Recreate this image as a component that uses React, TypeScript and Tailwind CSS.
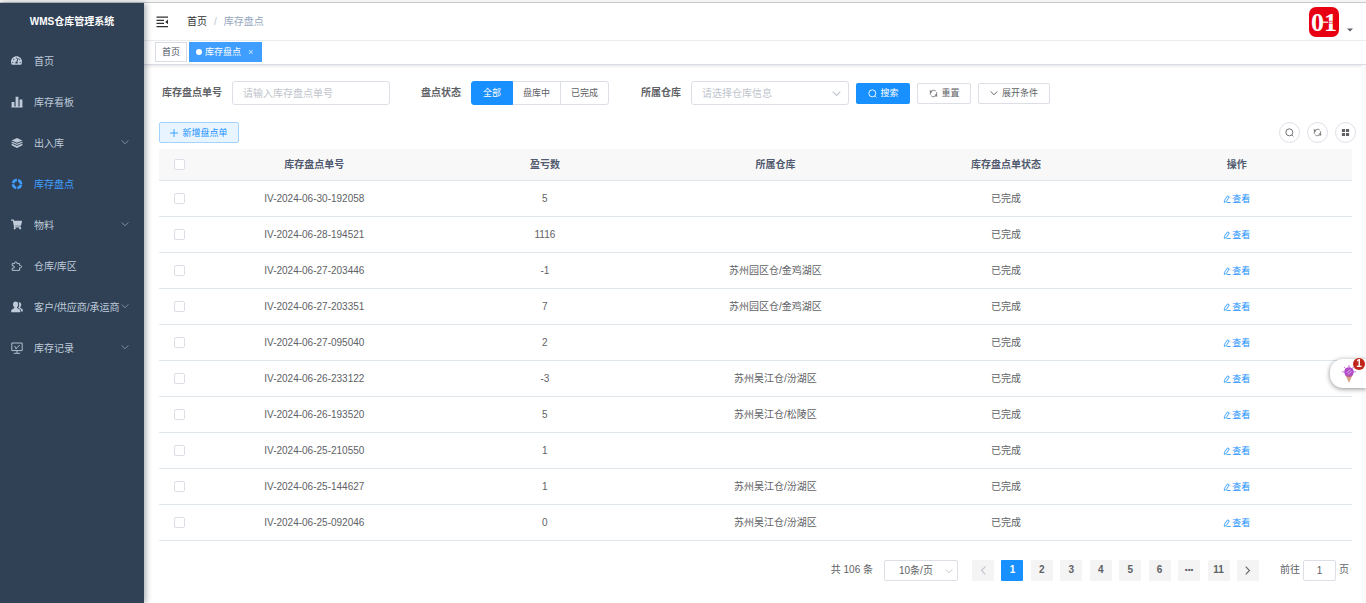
import { useState } from "react";
import type { ReactNode } from "react";
import clsx from "clsx";
import { FaShoppingCart, FaTachometerAlt } from "react-icons/fa";

const Chevron = ({ className }: { className?: string }) => (
  <svg viewBox="0 0 10 10" className={className} fill="none" stroke="currentColor" strokeWidth="1.2">
    <path d="M.8 3 5 7.2 9.2 3" />
  </svg>
);

const BarsIcon = () => (
  <svg viewBox="0 0 12 12" className="size-3" fill="currentColor">
    <path d="M.6 6h2.8v5H.6zM4.6.8h2.8V11H4.6zM8.6 3.5h2.8V11H8.6zM.4 10.4h11.2v1H.4z" />
  </svg>
);

const LayersIcon = () => (
  <svg viewBox="0 0 12 12" className="size-3" fill="currentColor">
    <path d="m6 1 5.4 2.4L6 5.8.6 3.4z" />
    <path d="M.6 4.4 6 6.8l5.4-2.4v1.3L6 8.1.6 5.7zM.6 6.6 6 9l5.4-2.4v1.6L6 10.9.6 8.2z" />
  </svg>
);

const RingIcon = () => (
  <svg viewBox="0 0 12 12" className="size-3" fill="none" stroke="currentColor">
    <circle cx="6" cy="6" r="4" strokeWidth="2.6" strokeDasharray="5.1 1.18" strokeDashoffset="-0.6" />
  </svg>
);

const PuzzleIcon = () => (
  <svg viewBox="0 0 12 12" className="size-3" fill="none" stroke="currentColor" strokeWidth="0.9">
    <path d="M1.2 3.6h2.4V3a1.2 1.2 0 0 1 2.4 0v.6h2.6v2h.9a1.1 1.1 0 0 1 0 2.2h-.9v2.6H1.2V8.2h1a1.2 1.2 0 0 0 0-2.4h-1z" />
  </svg>
);

const PeopleIcon = () => (
  <svg viewBox="0 0 12 12" className="size-3" fill="currentColor">
    <path d="M4.6.6c1.6 0 2.6 1.2 2.6 2.8 0 1.2-.5 2.2-1.1 2.8v.9l2.5 1.5c.5.3.7.8.7 1.4v1.2H.2V10c0-.6.3-1.1.8-1.4l2.3-1.5v-.9C2.6 5.6 2 4.6 2 3.4 2 1.8 3 .6 4.6.6z" />
    <path d="M7.4 1.2c1.7-.3 2.9.8 2.9 2.4 0 1-.4 1.8-1 2.4v.8l1.9 1.2c.4.2.6.6.6 1.1v1.3h-1.7c0-1.2-.3-1.9-1-2.3L7.2 6.9c.6-.8 1-1.9 1-3.2 0-1-.3-1.9-.8-2.5z" />
  </svg>
);

const MonitorIcon = () => (
  <svg viewBox="0 0 12 12" className="size-3" fill="none" stroke="currentColor" strokeWidth="0.9">
    <path d="M.8 1h10.4v7.6H.8zM6 8.6v2.6M2.8 11.3h6.4M3.4 4l2 2.4L8.6 3M4.2 6.8h1.4" />
  </svg>
);

const SearchIcon = () => (
  <svg viewBox="0 0 10 10" className="size-[9px]" fill="none" stroke="currentColor">
    <circle cx="4.8" cy="4.8" r="3.9" />
    <path d="m7.5 7.7 1.7 1.7" />
  </svg>
);

const RefreshIcon = () => (
  <svg viewBox="0 0 10 10" className="size-[9px]" fill="none" stroke="currentColor" strokeWidth="0.9">
    <path d="M1.5 6.4V4.6a3.4 3.4 0 0 1 3.4-3.1h1.4l1.2.9M8.5 3.6v1.8a3.4 3.4 0 0 1-3.4 3.1H3.7l-1.2-.9M1.4 1.4v2h2M8.6 8.6v-2h-2" />
  </svg>
);

const GridIcon = () => (
  <svg viewBox="0 0 10 10" className="size-[9px]" fill="currentColor">
    <path d="M1 1.2h3.5v3.3H1zM5.5 1.2H9v3.3H5.5zM1 5.5h3.5v3.3H1zM5.5 5.5H9v3.3H5.5z" />
  </svg>
);

const EditIcon = () => (
  <svg viewBox="0 0 10 10" className="size-2" fill="none" stroke="currentColor">
    <path d="M5.6 1.1 7.9 2.4 4.2 8.2 1.6 9.1 1.8 6.8zM4.6 9.4h5" />
  </svg>
);

const FoldIcon = () => (
  <svg viewBox="0 0 12 12" className="h-3 w-[13px] text-[#303133]" fill="currentColor">
    <path d="M0 .5h11.5v1.2H0zM0 3.7h7.5v1.2H0zM0 6.8h7.5V8H0zM0 10h11.5v1.2H0zM11.5 3.6v4.6L8.7 5.9z" />
  </svg>
);

type MenuItem = { label: string; icon: ReactNode; children?: boolean; active?: boolean };

const menu: MenuItem[] = [
  { label: "首页", icon: <FaTachometerAlt size={11} /> },
  { label: "库存看板", icon: <BarsIcon /> },
  { label: "出入库", icon: <LayersIcon />, children: true },
  { label: "库存盘点", icon: <RingIcon />, active: true },
  { label: "物料", icon: <FaShoppingCart size={11} />, children: true },
  { label: "仓库/库区", icon: <PuzzleIcon /> },
  { label: "客户/供应商/承运商", icon: <PeopleIcon />, children: true },
  { label: "库存记录", icon: <MonitorIcon />, children: true },
];

const rows = [
  { no: "IV-2024-06-30-192058", diff: 5, place: "" },
  { no: "IV-2024-06-28-194521", diff: 1116, place: "" },
  { no: "IV-2024-06-27-203446", diff: -1, place: "苏州园区仓/金鸡湖区" },
  { no: "IV-2024-06-27-203351", diff: 7, place: "苏州园区仓/金鸡湖区" },
  { no: "IV-2024-06-27-095040", diff: 2, place: "" },
  { no: "IV-2024-06-26-233122", diff: -3, place: "苏州吴江仓/汾湖区" },
  { no: "IV-2024-06-26-193520", diff: 5, place: "苏州吴江仓/松陵区" },
  { no: "IV-2024-06-25-210550", diff: 1, place: "" },
  { no: "IV-2024-06-25-144627", diff: 1, place: "苏州吴江仓/汾湖区" },
  { no: "IV-2024-06-25-092046", diff: 0, place: "苏州吴江仓/汾湖区" },
];

const Sidebar = () => (
  <aside className="relative z-10 w-36 shrink-0 bg-[#304156] text-[#bfcbd9] shadow-[2px_0_6px_rgba(0,21,41,0.35)]">
    <h1 className="flex h-[37px] items-center justify-center text-[10px] font-bold text-white">
      WMS仓库管理系统
    </h1>
    <nav>
      {menu.map((item) => (
        <a
          key={item.label}
          href="#"
          className={clsx("relative flex h-[41px] items-center pl-[11px]", item.active && "text-[#409eff]")}
        >
          <span className="flex w-[23px] items-center">{item.icon}</span>
          <span className="whitespace-nowrap pt-0.5">{item.label}</span>
          {item.children && (
            <Chevron className="absolute right-[15px] top-4 size-2 text-[#8592a3]" />
          )}
        </a>
      ))}
    </nav>
  </aside>
);

const Header = () => (
  <header className="flex h-[38px] items-center justify-between border-b border-[#f0f1f3] pl-3 pr-[13px]">
    <div className="flex items-center">
      <button aria-label="收起菜单">
        <FoldIcon />
      </button>
      <nav className="ml-[18px] flex items-center gap-[7px]">
        <a href="#" className="text-[#303133]">首页</a>
        <span className="text-[#c0c4cc]">/</span>
        <span className="text-[#97a8be]">库存盘点</span>
      </nav>
    </div>
    <button className="flex items-end gap-2" aria-label="用户">
      <svg viewBox="0 0 30 30" className="size-[30px] overflow-visible">
        <rect width="30" height="30" rx="7" fill="#e60012" />
        <text x="2" y="24" fontSize="26" fontWeight="bold" fontFamily="Liberation Serif, serif" fill="#fff">
          01
        </text>
        <path d="M14 15.2h5" stroke="#fff" strokeWidth="1.2" />
        <path d="M19.5 14.3h6M19.5 16.3h6" stroke="#e60012" strokeWidth="0.6" />
      </svg>
      <svg viewBox="0 0 6 4" className="mb-[5px] h-1 w-1.5 fill-[#5a5e66]">
        <path d="M0 .5h6L3 3.5z" />
      </svg>
    </button>
  </header>
);

const TagsView = () => (
  <div className="flex h-6 gap-0.5 border-b border-[#d8dce5] pl-[11px] pt-px text-[9px] shadow-[0_1px_3px_rgba(0,0,0,0.12)]">
    <a href="#" className="flex h-5 items-center border border-[#d8dce5] px-1.5 text-[#495060]">
      首页
    </a>
    <a href="#" className="flex h-5 items-center bg-[#409eff] pl-[7px] pr-2 text-white">
      <span className="mr-[3px] size-1.5 rounded-full bg-white" />
      库存盘点
      <span className="ml-1.5 w-[7px] text-center text-[#cfe6ff]">×</span>
    </a>
  </div>
);

const states = ["全部", "盘库中", "已完成"];

const Filters = () => {
  const [state, setState] = useState("全部");
  return (
    <form className="flex items-center whitespace-nowrap">
      <label htmlFor="no" className="ml-[3px] mr-2.5 font-bold">库存盘点单号</label>
      <input
        id="no"
        placeholder="请输入库存盘点单号"
        className="h-6 w-[158px] rounded-[3px] border border-[#dcdfe6] px-2.5 outline-none placeholder:text-[#c0c4cc]"
      />
      <fieldset className="ml-[31px] flex items-center">
        <legend className="float-left mr-2.5 font-bold">盘点状态</legend>
        <div className="flex text-[9px]">
          {states.map((s) => (
            <label
              key={s}
              className={clsx(
                "-ml-px flex h-6 items-center border px-2.5 first:ml-0 first:rounded-l-[3px] first:px-[11px] last:rounded-r-[3px]",
                s === state ? "relative border-[#1890ff] bg-[#1890ff] text-white" : "border-[#dcdfe6]"
              )}
            >
              <input
                type="radio"
                name="state"
                className="sr-only"
                checked={s === state}
                onChange={() => setState(s)}
              />
              {s}
            </label>
          ))}
        </div>
      </fieldset>
      <label htmlFor="place" className="ml-8 mr-2.5 font-bold">所属仓库</label>
      <div className="relative">
        <select
          id="place"
          className="h-6 w-[158px] appearance-none rounded-[3px] border border-[#dcdfe6] bg-white px-2.5 pt-px text-[#c0c4cc] outline-none"
        >
          <option>请选择仓库信息</option>
        </select>
        <Chevron className="pointer-events-none absolute right-2 top-2 size-[9px] text-[#c0c4cc]" />
      </div>
      <div className="ml-[7px] flex gap-[7px] text-[9px]">
        <button type="button" className="flex h-[21px] w-[54px] items-center justify-center gap-1 rounded-xs bg-[#1890ff] text-white">
          <SearchIcon />
          搜索
        </button>
        <button type="button" className="flex h-[21px] w-[54px] items-center justify-center gap-1 rounded-xs border border-[#dcdfe6]">
          <RefreshIcon />
          重置
        </button>
        <button type="button" className="flex h-[21px] w-[72px] items-center justify-center gap-1 rounded-xs border border-[#dcdfe6]">
          <Chevron className="size-2" />
          展开条件
        </button>
      </div>
    </form>
  );
};

const tools = [
  { label: "隐藏搜索", icon: <SearchIcon /> },
  { label: "刷新", icon: <RefreshIcon /> },
  { label: "显隐列", icon: <GridIcon /> },
];

const Toolbar = () => (
  <div className="mt-[17px] flex justify-between">
    <button className="flex h-[21px] w-20 items-center justify-center gap-1 rounded-xs border border-[#a3d3ff] bg-[#e8f4ff] text-[9px] text-[#1890ff]">
      <svg viewBox="0 0 8 8" className="size-2" stroke="currentColor" strokeWidth="0.8">
        <path d="M4 0v8M0 4h8" />
      </svg>
      新增盘点单
    </button>
    <div className="flex gap-[7px]">
      {tools.map((t) => (
        <button
          key={t.label}
          aria-label={t.label}
          className="flex size-[21px] items-center justify-center rounded-full border border-[#dcdfe6]"
        >
          {t.icon}
        </button>
      ))}
    </div>
  </div>
);

const Check = ({ label }: { label: string }) => (
  <input
    type="checkbox"
    aria-label={label}
    className="mx-auto block size-[11px] appearance-none rounded-xs border border-[#dcdfe6] bg-white checked:bg-[#1890ff]"
  />
);

const StockTable = () => (
  <div className="mt-1.5 pr-1">
    <table className="w-full table-fixed text-center">
      <thead>
        <tr className="h-[31px] border-b border-[#dfe6ec] bg-[#f8f8f9] text-[#515a6e]">
          <th className="w-10"><Check label="全选" /></th>
          <th className="pt-0.5">库存盘点单号</th>
          <th className="pt-0.5">盈亏数</th>
          <th className="pt-0.5">所属仓库</th>
          <th className="pt-0.5">库存盘点单状态</th>
          <th className="pt-0.5">操作</th>
        </tr>
      </thead>
      <tbody>
        {rows.map((row) => (
          <tr key={row.no} className="h-9 border-b border-[#dfe6ec]">
            <td><Check label={row.no} /></td>
            <td className="pt-0.5">{row.no}</td>
            <td className="pt-0.5">{row.diff}</td>
            <td className="pt-0.5">{row.place}</td>
            <td className="pt-0.5">已完成</td>
            <td className="pt-0.5">
              <a href="#" className="inline-flex items-center gap-px text-[9px] text-[#1890ff]">
                <EditIcon />
                查看
              </a>
            </td>
          </tr>
        ))}
      </tbody>
    </table>
  </div>
);

const pages = ["1", "2", "3", "4", "5", "6", "•••", "11"];

const Pagination = () => (
  <div className="mt-[19px] flex items-center justify-end pr-[7px]">
    <span>共 106 条</span>
    <div className="relative ml-[11px]">
      <select
        aria-label="每页条数"
        className="h-[21px] w-[74px] appearance-none rounded-xs border border-[#dcdfe6] bg-white pl-3.5 pt-px outline-none"
      >
        <option>10条/页</option>
      </select>
      <Chevron className="pointer-events-none absolute right-[5px] top-[7px] size-2 text-[#c0c4cc]" />
    </div>
    <div className="ml-3.5 flex w-[287px] justify-between font-bold">
      <button aria-label="上一页" disabled className="flex h-[21px] w-[22px] items-center justify-center rounded-[1px] bg-[#f4f4f5] text-[#c0c4cc]">
        <Chevron className="size-[9px] rotate-90" />
      </button>
      {pages.map((p) => (
        <button
          key={p}
          className={clsx(
            "flex h-[21px] w-[22px] items-center justify-center rounded-[1px]",
            p === "1" ? "bg-[#1890ff] text-white" : "bg-[#f4f4f5]",
            p === "•••" && "text-[8px]"
          )}
        >
          {p}
        </button>
      ))}
      <button aria-label="下一页" className="flex h-[21px] w-[22px] items-center justify-center rounded-[1px] bg-[#f4f4f5]">
        <Chevron className="size-[9px] -rotate-90" />
      </button>
    </div>
    <label className="ml-[21px] flex items-center gap-[3px]">
      前往
      <input
        defaultValue="1"
        className="h-[21px] w-[33px] rounded-xs border border-[#dcdfe6] text-center outline-none"
      />
      页
    </label>
  </div>
);

const HelpWidget = () => (
  <button
    aria-label="助手"
    className="fixed right-0 top-[359px] z-20 flex h-[29px] w-9 items-center rounded-l-[13px] bg-white pl-3 shadow-[0_1px_5px_rgba(0,0,0,0.45)]"
  >
    <svg viewBox="0 0 14 18" className="h-[18px] w-3.5" fill="none">
      <path d="M7 .3v1.8M2.2 2l1.3 1.3M11.8 2l-1.3 1.3M.2 6.8h1.6M12.2 6.8h1.6" stroke="#c04fd0" />
      <path d="M3.2 9.4h7.6L7 17.8z" fill="#d6a283" />
      <circle cx="7" cy="7" r="4.8" fill="#b04cc8" />
      <path d="M4.6 7.6 8.4 4.6M5.8 9.4l3.8-3" stroke="#f0c4f2" strokeWidth="0.8" />
      <path d="M4.6 11h4.8" stroke="#b45a8c" />
    </svg>
    <span className="absolute -top-px right-px flex size-3 items-center justify-center rounded-full bg-[#c0251c] text-[10px] font-bold text-white">
      1
    </span>
  </button>
);

export default function App() {
  return (
    <div className="flex min-h-screen flex-col bg-white font-['Liberation_Sans','Noto_Sans_CJK_SC',sans-serif] text-[10px] leading-[14px] text-[#606266]">
      <div className="h-[3px] border-b border-[#c8c8c8] bg-[#f5f5f5]" />
      <div className="flex flex-1">
        <Sidebar />
        <div className="flex min-w-0 flex-1 flex-col">
          <Header />
          <TagsView />
          <main className="flex-1 border-r-4 border-[#fafafa] pb-4 pl-[15px] pr-1.5 pt-4">
            <Filters />
            <Toolbar />
            <StockTable />
            <Pagination />
          </main>
        </div>
      </div>
      <HelpWidget />
    </div>
  );
}
